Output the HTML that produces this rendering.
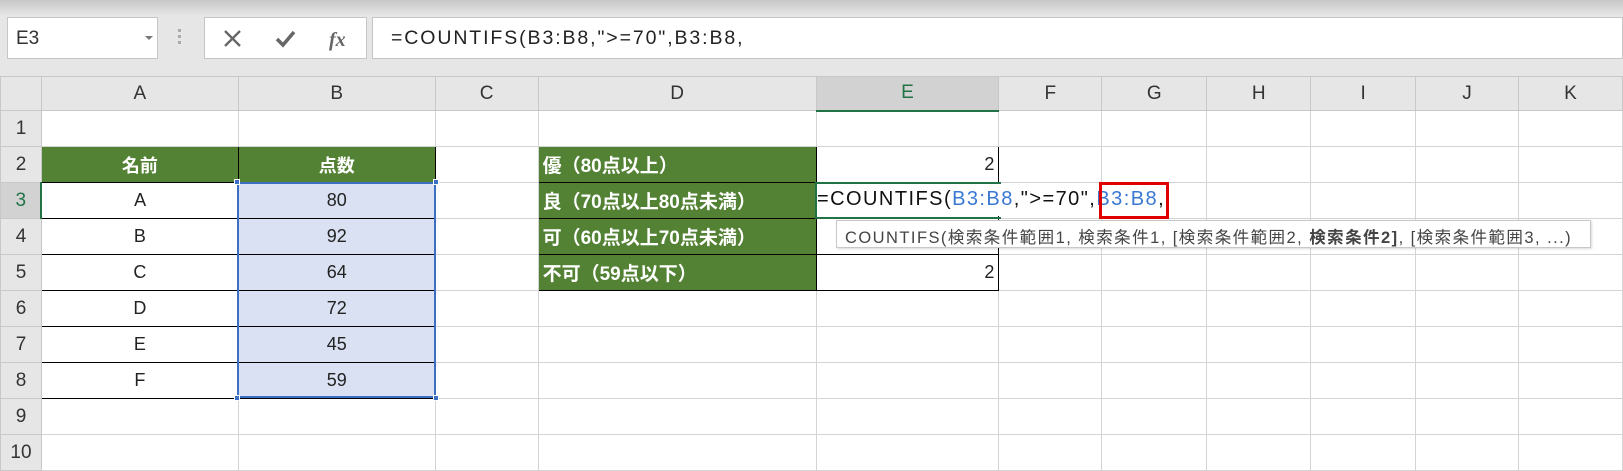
<!DOCTYPE html>
<html><head><meta charset="utf-8"><style>
*{box-sizing:border-box;margin:0;padding:0}
body{width:1623px;height:470px;overflow:hidden;background:#e6e6e6;font-family:"Liberation Sans","Noto Sans CJK JP",sans-serif;position:relative}
.abs{position:absolute}
#top{left:0;top:0;width:1623px;height:16px;background:linear-gradient(#c8c8c8,#e6e6e6)}
.box{background:#fff;border:1px solid #c6c6c6}
table{position:absolute;left:0;top:76px;border-collapse:collapse;table-layout:fixed;background:#fff}
td{border:1px solid #d4d4d4;height:36px;font-size:18px;color:#222;text-align:center;padding:0 4px;white-space:nowrap;overflow:visible}
tr.h td{height:34px;background:#e6e6e6;border-color:#c8c8c8;color:#333;font-size:19px}
td.rh{background:#e6e6e6;border-color:#c8c8c8;color:#333;font-size:19px;text-align:center;padding:0}
td.g{background:#548235;color:#fff;font-weight:bold;border:1px solid #000}
td.gl{background:#548235;color:#fff;font-weight:bold;border:1px solid #000;text-align:left;padding-left:4px;font-size:19px}
td.w{border:1px solid #000}
td.s{background:#d9e1f2;border:1px solid #000}
td.r{border:1px solid #000;text-align:right;padding-right:4px}
.bl{color:#3a78d4}
</style></head><body>
<div id="top" class="abs"></div>
<div class="abs box" style="left:7px;top:17px;width:151px;height:42px;font-size:19px;color:#333;padding:10px 0 0 8px">E3<span class="abs" style="left:137px;top:18px;width:0;height:0;border-left:4px solid transparent;border-right:4px solid transparent;border-top:4px solid #777"></span></div>
<div class="abs" style="left:178px;top:29px;width:3px;height:3px;background:#aaa;box-shadow:0 6px 0 #aaa,0 12px 0 #aaa"></div>
<div class="abs box" style="left:204px;top:17px;width:163px;height:42px">
<svg width="163" height="42" style="position:absolute;left:0;top:0"><path d="M20 13l15 15M35 13l-15 15" stroke="#666" stroke-width="2.3" fill="none"/><path d="M72 21l6 6 11-13" stroke="#666" stroke-width="3.5" fill="none"/><text x="124" y="28" font-family="Liberation Serif" font-style="italic" font-weight="bold" font-size="20" fill="#666">fx</text></svg></div>
<div class="abs box" style="left:372px;top:17px;width:1251px;height:42px;font-size:19.5px;letter-spacing:1.9px;color:#222;padding:9px 0 0 18px">=COUNTIFS(B3:B8,"&gt;=70",B3:B8,</div>
<table>
<colgroup><col style="width:41px"><col style="width:197px"><col style="width:197px"><col style="width:103px"><col style="width:278px"><col style="width:183px"><col style="width:103px"><col style="width:105px"><col style="width:104px"><col style="width:105px"><col style="width:103px"><col style="width:104px"></colgroup>
<tr class="h"><td></td><td>A</td><td>B</td><td>C</td><td>D</td><td style="background:#d2d2d2;color:#217346;border-bottom:2px solid #217346">E</td><td>F</td><td>G</td><td>H</td><td>I</td><td>J</td><td>K</td></tr>
<tr><td class="rh">1</td><td></td><td></td><td></td><td></td><td></td><td></td><td></td><td></td><td></td><td></td><td></td></tr>
<tr><td class="rh">2</td><td class="g">名前</td><td class="g">点数</td><td></td><td class="gl">優（80点以上）</td><td class="r">2</td><td></td><td></td><td></td><td></td><td></td><td></td></tr>
<tr><td class="rh" style="background:#d2d2d2;color:#217346;border-right:2px solid #217346">3</td><td class="w">A</td><td class="s">80</td><td></td><td class="gl">良（70点以上80点未満）</td><td class="w"></td><td></td><td></td><td></td><td></td><td></td><td></td></tr>
<tr><td class="rh">4</td><td class="w">B</td><td class="s">92</td><td></td><td class="gl">可（60点以上70点未満）</td><td class="w"></td><td></td><td></td><td></td><td></td><td></td><td></td></tr>
<tr><td class="rh">5</td><td class="w">C</td><td class="s">64</td><td></td><td class="gl">不可（59点以下）</td><td class="r">2</td><td></td><td></td><td></td><td></td><td></td><td></td></tr>
<tr><td class="rh">6</td><td class="w">D</td><td class="s">72</td><td></td><td></td><td></td><td></td><td></td><td></td><td></td><td></td><td></td></tr>
<tr><td class="rh">7</td><td class="w">E</td><td class="s">45</td><td></td><td></td><td></td><td></td><td></td><td></td><td></td><td></td><td></td></tr>
<tr><td class="rh">8</td><td class="w">F</td><td class="s">59</td><td></td><td></td><td></td><td></td><td></td><td></td><td></td><td></td><td></td></tr>
<tr><td class="rh">9</td><td></td><td></td><td></td><td></td><td></td><td></td><td></td><td></td><td></td><td></td><td></td></tr>
<tr><td class="rh">10</td><td></td><td></td><td></td><td></td><td></td><td></td><td></td><td></td><td></td><td></td><td></td></tr>
</table>
<div class="abs" style="left:237px;top:182px;width:199px;height:216px;border:2px solid #3a6fc4"></div>
<div class="abs" style="left:234px;top:179px;width:6px;height:6px;background:#3a6fc4;border:1px solid #fff"></div>
<div class="abs" style="left:433px;top:179px;width:6px;height:6px;background:#3a6fc4;border:1px solid #fff"></div>
<div class="abs" style="left:234px;top:395px;width:6px;height:6px;background:#3a6fc4;border:1px solid #fff"></div>
<div class="abs" style="left:433px;top:395px;width:6px;height:6px;background:#3a6fc4;border:1px solid #fff"></div>
<div class="abs" style="left:815px;top:182px;width:186px;height:37px;border:2px solid #217346;border-right:none"></div>
<div class="abs" style="left:817px;top:184px;width:360px;height:32px;background:#fff;font-size:20px;letter-spacing:1.45px;color:#111;padding-top:4px;white-space:nowrap">=COUNTIFS(<span class="bl">B3:B8</span>,"&gt;=70",<span class="bl">B3:B8</span>,</div>
<div class="abs" style="left:1099px;top:182px;width:70px;height:37px;border:3px solid #e00000"></div>
<div class="abs" style="left:836px;top:220px;width:755px;height:28px;background:#fff;border:1px solid #c8c8c8;box-shadow:1px 1px 2px rgba(0,0,0,.15);font-size:16.5px;letter-spacing:1.45px;color:#444;padding:3px 0 0 8px;white-space:nowrap">COUNTIFS(検索条件範囲1, 検索条件1, [検索条件範囲2, <b>検索条件2]</b>, [検索条件範囲3, ...)</div>
</body></html>
